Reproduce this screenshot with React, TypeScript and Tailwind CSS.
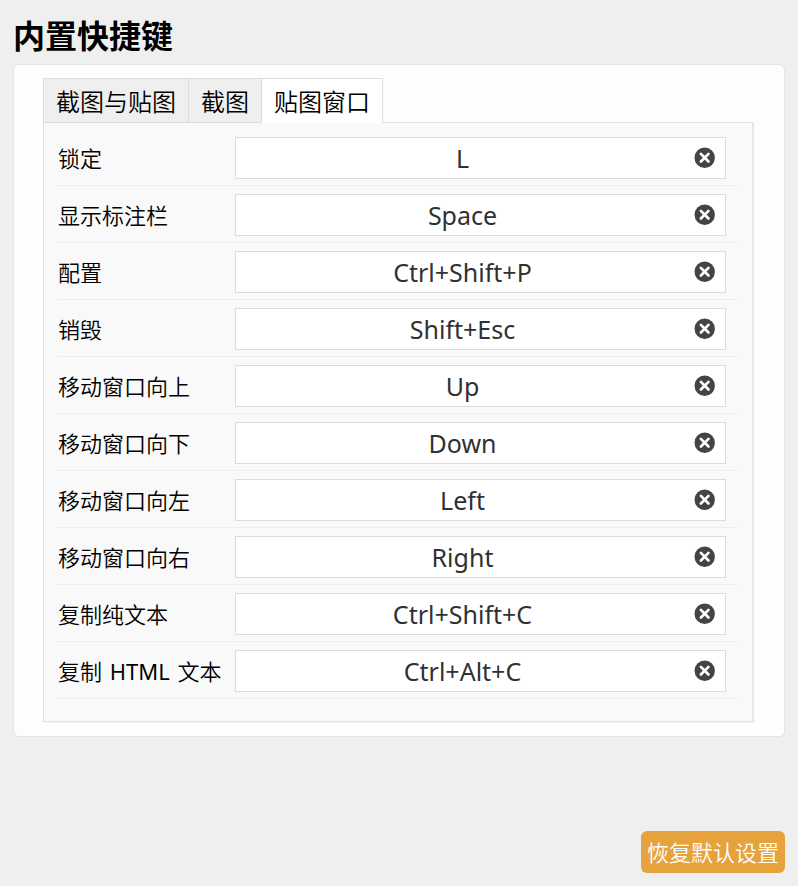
import React, { useState } from 'react';

interface Shortcut {
  id: string;
  label: React.ReactNode;
  keys: string;
}

const TABS = ['截图与贴图', '截图', '贴图窗口'];

const DEFAULTS: Shortcut[] = [
  { id: 'lock', label: '锁定', keys: 'L' },
  { id: 'toolbar', label: '显示标注栏', keys: 'Space' },
  { id: 'config', label: '配置', keys: 'Ctrl+Shift+P' },
  { id: 'destroy', label: '销毁', keys: 'Shift+Esc' },
  { id: 'up', label: '移动窗口向上', keys: 'Up' },
  { id: 'down', label: '移动窗口向下', keys: 'Down' },
  { id: 'left', label: '移动窗口向左', keys: 'Left' },
  { id: 'right', label: '移动窗口向右', keys: 'Right' },
  { id: 'copy-text', label: '复制纯文本', keys: 'Ctrl+Shift+C' },
  {
    id: 'copy-html',
    label: <>复制 <span className="mx-0.5 font-normal">HTML</span> 文本</>,
    keys: 'Ctrl+Alt+C',
  },
];

const ClearIcon = () => (
  <svg viewBox="0 0 21 21" className="size-[21px]" aria-hidden="true">
    <circle cx="10.7" cy="10.7" r="10.2" fill="#434447" />
    <path d="M6.9 6.9l7.6 7.6M14.5 6.9l-7.6 7.6" stroke="#fff" strokeWidth="2.7" strokeLinecap="round" />
  </svg>
);

const ShortcutRow: React.FC<{ item: Shortcut; onClear: () => void }> = ({ item, onClear }) => (
  <div className="flex items-center border-b border-[#ededed] pt-2 pr-3 pb-1.5">
    <label
      htmlFor={item.id}
      className="w-[177px] shrink-0 text-[22px] leading-8 font-[350] whitespace-nowrap text-black"
    >
      {item.label}
    </label>
    <div className="relative min-w-0 flex-1">
      <input
        id={item.id}
        type="text"
        readOnly
        value={item.keys}
        className="block h-[42px] w-full border border-[#dcdcdc] bg-white pr-9 text-center text-[25px] text-[#303133] outline-none"
      />
      <button
        type="button"
        aria-label="清除"
        onClick={onClear}
        className="absolute inset-y-0 right-[11px] flex cursor-pointer items-center pb-px"
      >
        <ClearIcon />
      </button>
    </div>
  </div>
);

const App: React.FC = () => {
  const [activeTab, setActiveTab] = useState(2);
  const [shortcuts, setShortcuts] = useState(DEFAULTS);

  const clear = (id: string) =>
    setShortcuts(shortcuts.map(s => (s.id === id ? { ...s, keys: '' } : s)));

  return (
    <div className="flex min-h-screen flex-col bg-[#efefef] p-[13px] font-['Noto_Sans','Noto_Sans_CJK_SC',sans-serif]">
      <h1 className="mb-1.5 text-[32px] leading-[45px] font-bold text-black">内置快捷键</h1>

      <main className="rounded-md border border-[#e4e4e4] bg-[#fdfdfd] pt-[13px] pr-[31px] pb-3.5 pl-[29px]">
        <div role="tablist" className="relative -mb-px flex">
          {TABS.map((tab, i) => (
            <button
              key={tab}
              type="button"
              role="tab"
              aria-selected={i === activeTab}
              onClick={() => setActiveTab(i)}
              className={`h-[45px] cursor-pointer border-t border-r border-[#dcdcdc] px-3 pt-0.5 text-2xl font-[350] text-black first:border-l ${
                i === activeTab ? 'bg-white' : 'border-b bg-[#efefef]'
              }`}
            >
              {tab}
            </button>
          ))}
        </div>

        <div
          role="tabpanel"
          className="border border-[#e2e2e2] bg-[#f9f9f9] px-3.5 pt-1.5 pb-[22px] shadow-[2px_1px_0_#f3f3f3]"
        >
          {shortcuts.map(item => (
            <ShortcutRow key={item.id} item={item} onClear={() => clear(item.id)} />
          ))}
        </div>
      </main>

      <button
        type="button"
        onClick={() => setShortcuts(DEFAULTS)}
        className="mt-auto h-[42px] cursor-pointer self-end rounded-md bg-[#e6a23c] px-1.5 text-[22px] font-[350] text-white"
      >
        恢复默认设置
      </button>
    </div>
  );
};

export default App;
